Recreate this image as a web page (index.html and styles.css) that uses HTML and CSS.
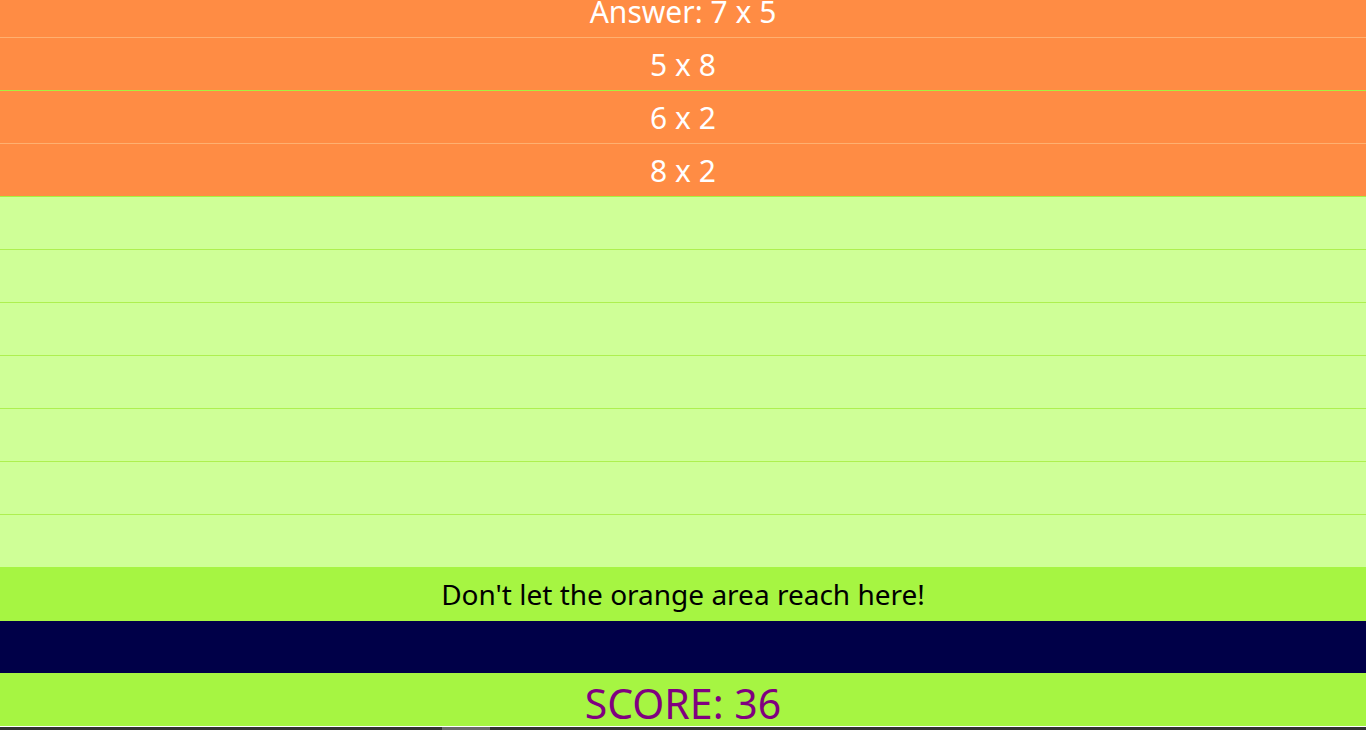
FILE: index.html
```html
<!DOCTYPE html>
<html>
<head>
<meta charset="utf-8">
<link rel="stylesheet" href="styles.css">
</head>
<body>
<div class="game">
  <div class="rows">
    <div class="row filled first">Answer: 7 x 5</div>
    <div class="row filled">5 x 8</div>
    <div class="row filled">6 x 2</div>
    <div class="row filled">8 x 2</div>
    <div class="row empty"></div>
    <div class="row empty"></div>
    <div class="row empty"></div>
    <div class="row empty"></div>
    <div class="row empty"></div>
    <div class="row empty"></div>
    <div class="row empty last"></div>
  </div>
  <div class="warning">Don't let the orange area reach here!</div>
  <div class="input-bar"></div>
  <div class="score">SCORE: 36</div>
  <div class="scrollbar"><div class="thumb"></div></div>
</div>
</body>
</html>
```
FILE: styles.css
```css
html, body {
  margin: 0;
  padding: 0;
  overflow: hidden;
  height: 730px;
  background: #ffffff;
}
body {
  font-family: "Noto Sans", "Open Sans", sans-serif;
}
.game {
  display: flex;
  flex-direction: column;
  width: 1366px;
  height: 730px;
  overflow: hidden;
}
.rows {
  display: flex;
  flex-direction: column;
  margin-top: -15px;
}
.row {
  height: 52px;
  border-bottom: 1px solid #b0ee52;
  display: flex;
  align-items: center;
  justify-content: center;
  font-size: 30px;
  color: #ffffff;
  box-sizing: content-box;
}
.row.filled {
  background: #ff8c44;
  border-bottom-color: #ffb070;
}
.row.filled:nth-child(4) {
  border-bottom-color: #a8f040;
}
.row.filled:nth-child(2) {
  border-bottom-color: #a8f040;
}
.row.empty {
  background: #cfff97;
  border-bottom-color: #aef050;
}
.row.last {
  border-bottom: none;
}
.warning {
  height: 54px;
  background: #a6f542;
  color: #000000;
  font-size: 28px;
  display: flex;
  align-items: center;
  justify-content: center;
}
.input-bar {
  height: 53px;
  background: #000048;
}
.score {
  height: 51px;
  background: #a6f542;
  color: #800080;
  font-size: 41px;
  display: flex;
  align-items: flex-end;
  justify-content: center;
  line-height: 1;
  padding-bottom: 2px;
}
.scrollbar {
  height: 3px;
  border-top: 1px solid #ffffff;
  background: #333333;
  position: relative;
}
.thumb {
  position: absolute;
  left: 442px;
  top: 0;
  width: 48px;
  height: 3px;
  background: #6a6a6a;
}
```
